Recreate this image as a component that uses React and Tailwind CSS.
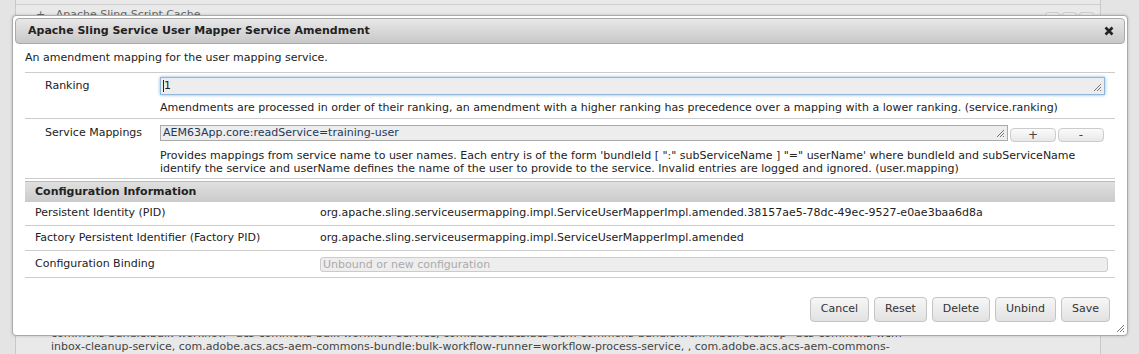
const FONT = { fontFamily: '"DejaVu Sans", Verdana, sans-serif' };

function Btn({ children, className = '' }) {
  return (
    <button
      className={`h-[25px] px-[10px] rounded-[4px] border border-[#c4c4c4] bg-linear-to-b from-[#f6f6f6] to-[#e2e2e2] text-[11px] text-[#333] ${className}`}
    >
      {children}
    </button>
  );
}

function Grip() {
  return (
    <svg width="9" height="9" viewBox="0 0 9 9" className="absolute right-[2px] bottom-[2px]">
      <path d="M8 1 L1 8 M8 4 L4 8 M8 7 L7 8" stroke="#777" strokeWidth="1" />
    </svg>
  );
}

export default function App() {
  return (
    <div className="relative w-[1139px] h-[354px] overflow-hidden bg-[#e4e4e4] text-[11px] text-[#222]" style={FONT}>
      {/* page behind the dialog */}
      <div className="ml-[15px] w-[1086px] h-full flex flex-col border-l border-r border-[#c9c9c9] bg-[#e9e9e9]">
        <div className="h-[5px] border-b border-[#cfcfcf]" />
        <div className="h-[20px] flex items-center justify-between pl-[20px] pr-[6px] text-[#666]">
          <span>+&nbsp;&nbsp;&nbsp;Apache Sling Script Cache</span>
          <div className="flex gap-[2px] mt-[6px]">
            <div className="w-[15px] h-[12px] rounded-[3px] border border-[#ccc] bg-[#eee]" />
            <div className="w-[15px] h-[12px] rounded-[3px] border border-[#ccc] bg-[#eee]" />
            <div className="w-[15px] h-[12px] rounded-[3px] border border-[#ccc] bg-[#eee]" />
          </div>
        </div>
        <div className="flex-1" />
        <div className="pl-[35px] pb-[1px] leading-[13px] text-[#444] whitespace-nowrap">
          <div>commons-bundle:bulk-workflow=acs-commons-bulk-workflow-service, com.adobe.acs.acs-aem-commons-bundle:wcm-inbox-cleanup=acs-commons-wcm-</div>
          <div>inbox-cleanup-service, com.adobe.acs.acs-aem-commons-bundle:bulk-workflow-runner=workflow-process-service, , com.adobe.acs.acs-aem-commons-</div>
        </div>
      </div>

      {/* dialog */}
      <div className="absolute left-[12px] top-[15px] w-[1116px] h-[321px] flex flex-col bg-white border border-[#aaa] rounded-[4px] p-[2px] shadow-[0_0_3px_rgba(0,0,0,0.2)]">
        <div className="h-[26px] shrink-0 flex items-center justify-between pl-[12px] pr-[10px] rounded-[4px] border border-[#aaa] bg-linear-to-b from-[#e8e8e8] to-[#c8c8c8]">
          <span className="font-bold text-[11px] text-[#222]">Apache Sling Service User Mapper Service Amendment</span>
          <svg width="10" height="10" viewBox="0 0 10 10">
            <path d="M1.5 1.5 L8.5 8.5 M8.5 1.5 L1.5 8.5" stroke="#222" strokeWidth="2.6" />
          </svg>
        </div>

        <div className="px-[10px] flex-1 flex flex-col">
          <p className="mt-[6px] h-[17px]">An amendment mapping for the user mapping service.</p>

          <div className="mt-[5px] border-t border-[#ccc]">
            {/* Ranking */}
            <div className="flex pt-[4px] pb-[3px] border-b border-[#ccc]">
              <div className="w-[135px] pl-[20px] pt-[1px] shrink-0">Ranking</div>
              <div className="flex-1 pr-[10px]">
                <div className="relative h-[18px] border border-[#8fb8dc] bg-[#ededed] shadow-[0_0_3px_#7fb2e5] flex items-center pl-[2px]">
                  <span className="border-l border-[#222] leading-[12px]">1</span>
                  <Grip />
                </div>
                <p className="mt-[6px] leading-[14px]">Amendments are processed in order of their ranking, an amendment with a higher ranking has precedence over a mapping with a lower ranking. (service.ranking)</p>
              </div>
            </div>

            {/* Service Mappings */}
            <div className="flex pt-[6px] pb-[3px] border-b border-[#ccc]">
              <div className="w-[135px] pl-[20px] shrink-0">Service Mappings</div>
              <div className="flex-1 pr-[10px]">
                <div className="flex items-start">
                  <div className="relative w-[848px] h-[16px] border border-[#aaa] bg-[#ededed] pl-[2px] leading-[14px] text-[#1d3a5c]">
                    AEM63App.core:readService=training-user
                    <Grip />
                  </div>
                  <button className="ml-[2px] mt-[3px] w-[46px] h-[14px] rounded-[4px] border border-[#ccc] bg-linear-to-b from-[#fbfbfb] to-[#e8e8e8] text-[12px] leading-[12px] text-[#444]">+</button>
                  <button className="ml-[2px] mt-[3px] w-[46px] h-[14px] rounded-[4px] border border-[#ccc] bg-linear-to-b from-[#fbfbfb] to-[#e8e8e8] text-[12px] leading-[12px] text-[#444]">-</button>
                </div>
                <p className="mt-[7px] leading-[13px]">
                  Provides mappings from service name to user names. Each entry is of the form 'bundleId [ ":" subServiceName ] "=" userName' where bundleId and subServiceName identify the service and userName defines the name of the user to provide to the service. Invalid entries are logged and ignored. (user.mapping)
                </p>
              </div>
            </div>

            {/* Configuration Information */}
            <div className="mt-[2px] h-[21px] flex items-center pl-[10px] font-bold border-t border-[#bbb] bg-linear-to-b from-[#e0e0e0] to-[#cbcbcb]">
              Configuration Information
            </div>
            <div className="flex items-center h-[24px] border-b border-[#ccc] pl-[10px]">
              <div className="w-[285px] shrink-0">Persistent Identity (PID)</div>
              <div>org.apache.sling.serviceusermapping.impl.ServiceUserMapperImpl.amended.38157ae5-78dc-49ec-9527-e0ae3baa6d8a</div>
            </div>
            <div className="flex items-center h-[25px] border-b border-[#ccc] pl-[10px]">
              <div className="w-[285px] shrink-0">Factory Persistent Identifier (Factory PID)</div>
              <div>org.apache.sling.serviceusermapping.impl.ServiceUserMapperImpl.amended</div>
            </div>
            <div className="flex items-center h-[27px] border-b border-[#ccc] pl-[10px]">
              <div className="w-[285px] shrink-0">Configuration Binding</div>
              <div className="w-[788px] h-[15px] rounded-[3px] border border-[#ccc] bg-[#eee] pl-[2px] leading-[13px] text-[#aaa]">Unbound or new configuration</div>
            </div>
          </div>

          <div className="flex-1" />
          <div className="flex justify-end gap-[5px] pr-[5px] pb-[11px]">
            <Btn>Cancel</Btn>
            <Btn>Reset</Btn>
            <Btn>Delete</Btn>
            <Btn>Unbind</Btn>
            <Btn>Save</Btn>
          </div>
        </div>
        <Grip />
      </div>
    </div>
  );
}
